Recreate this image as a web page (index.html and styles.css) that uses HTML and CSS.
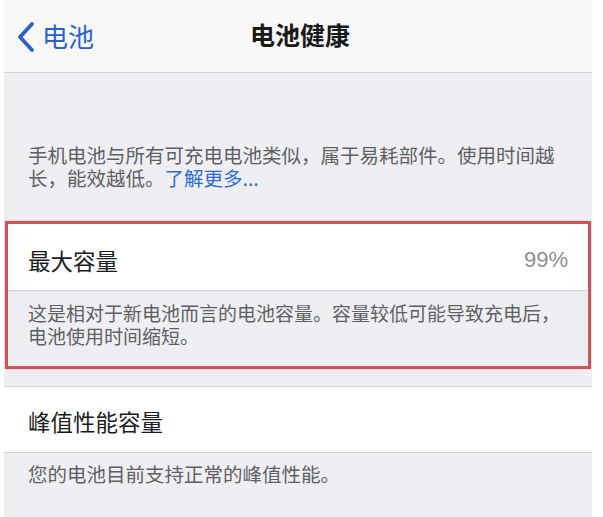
FILE: index.html
```html
<!DOCTYPE html>
<html lang="zh-CN">
<head>
<meta charset="utf-8">
<link rel="stylesheet" href="styles.css">
</head>
<body>
<div class="app">
  <header class="nav">
    <div class="back">
      <svg class="chev" width="22" height="32" viewBox="0 0 22 32"><path d="M17 3 L5 16 L17 29" fill="none" stroke="#2a62c6" stroke-width="3.8" stroke-linecap="round" stroke-linejoin="round"/></svg>
      <span class="back-label">电池</span>
    </div>
    <h1 class="title">电池健康</h1>
  </header>
  <p class="intro">手机电池与所有可充电电池类似，属于易耗部件。使用时间越长，能效越低。<span class="link">了解更多...</span></p>
  <section class="group highlight">
    <div class="row"><span class="label">最大容量</span><span class="value">99%</span></div>
    <p class="note note-a">这是相对于新电池而言的电池容量。容量较低可能导致充电后，电池使用时间缩短。</p>
  </section>
  <section class="group plain">
    <div class="row row-b"><span class="label">峰值性能容量</span></div>
    <p class="note note-b">您的电池目前支持正常的峰值性能。</p>
  </section>
</div>
</body>
</html>
```
FILE: styles.css
```css
html, body {
  margin: 0;
  padding: 0;
  background: #ffffff;
}
body {
  font-family: "Noto Sans CJK SC", "Noto Sans", sans-serif;
  width: 603px;
  height: 517px;
  overflow: hidden;
}
.app {
  margin-left: 4px;
  width: 588px;
  height: 517px;
  background: #efeff3;
}
.nav {
  height: 72px;
  background: #f8f8f8;
  border-bottom: 1px solid #cfcfd3;
  display: flex;
  align-items: center;
  justify-content: center;
  position: relative;
}
.back {
  position: absolute;
  left: 11px;
  top: 0;
  height: 72px;
  display: flex;
  align-items: center;
  gap: 5px;
  color: #2a62c6;
}
.chev { display: block; margin-top: 2px; }
.back-label {
  font-size: 26px;
  line-height: 30px;
}
.title {
  margin: 0;
  font-size: 25px;
  font-weight: 700;
  color: #1a1a1a;
  line-height: 30px;
  margin-left: 4px;
  margin-top: -4px;
}
.intro {
  margin: 0;
  padding: 70px 20px 32px 24px;
  font-size: 19.5px;
  line-height: 23px;
  color: #5f5f64;
}
.link { color: #2f6ad4; }
.group { margin: 0; }
.highlight {
  border: 3px solid #c9545c;
  margin-left: 1px;
  margin-right: 1px;
  box-shadow: 0 0 2px rgba(220, 100, 110, 0.4);
}
.row {
  background: #ffffff;
  height: 67px;
  border-bottom: 1px solid #d2d2d6;
  display: flex;
  align-items: center;
  justify-content: space-between;
  padding: 6px 20px 0 20px;
  box-sizing: border-box;
}
.label {
  font-size: 22.5px;
  color: #1c1c1e;
}
.value {
  font-size: 22px;
  color: #8e8e93;
  font-family: "Liberation Sans", sans-serif;
}
.note {
  margin: 0;
  font-size: 19.5px;
  line-height: 23px;
  color: #5f5f64;
}
.note-a { font-size: 19px; padding: 10px 20px 19px 20px; }
.plain {
  margin-top: 17px;
  border-top: 1px solid #d2d2d6;
}
.row-b { height: 66px; padding-left: 24px; padding-top: 2px; }
.note-b { padding: 9px 24px 20px 24px; }
```
